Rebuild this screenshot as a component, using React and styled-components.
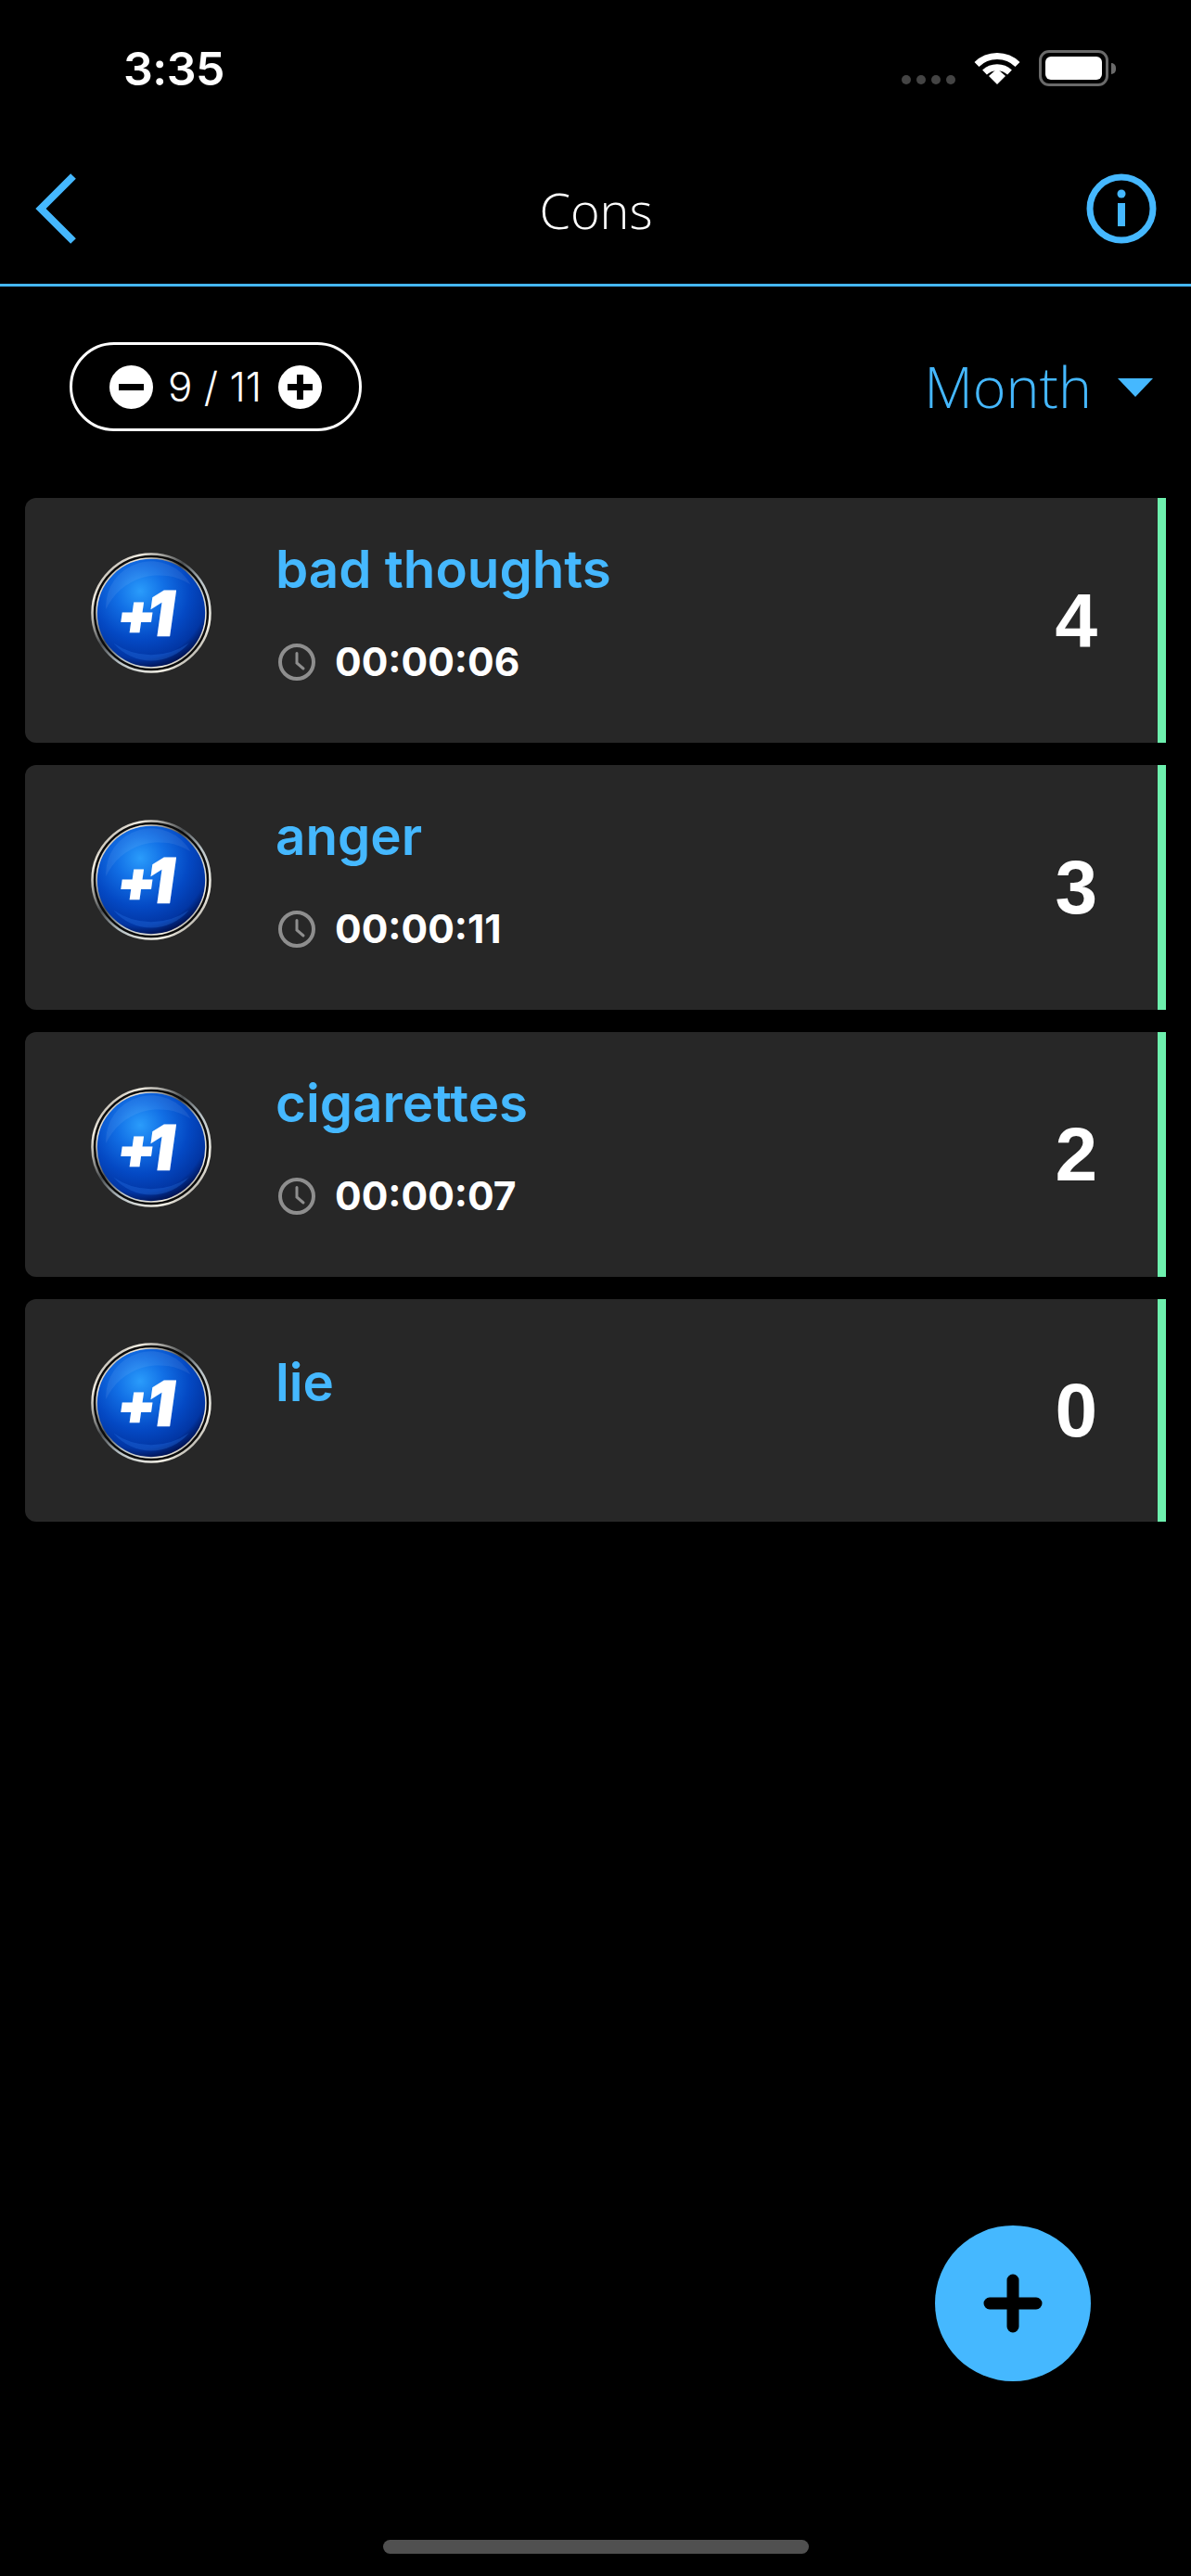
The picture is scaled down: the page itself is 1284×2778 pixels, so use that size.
import styled, { createGlobalStyle } from 'styled-components';

const BLUE = '#45b8ff';

const GlobalStyle = createGlobalStyle`
  html, body {
    margin: 0;
    padding: 0;
    background: #000;
  }
  * {
    box-sizing: border-box;
  }
`;

const items = [
  { id: 'bad', title: 'bad thoughts', time: '00:00:06', count: 4 },
  { id: 'anger', title: 'anger', time: '00:00:11', count: 3 },
  { id: 'cig', title: 'cigarettes', time: '00:00:07', count: 2 },
  { id: 'lie', title: 'lie', count: 0 },
];

const PlusOneBadge = ({ uid }) => (
  <BadgeSvg viewBox="0 0 128 128">
    <defs>
      <radialGradient id={`glow-${uid}`} cx="40%" cy="30%" r="72%">
        <stop offset="0" stopColor="#2a9cfb" />
        <stop offset="0.3" stopColor="#1270e6" />
        <stop offset="0.62" stopColor="#0449c4" />
        <stop offset="0.86" stopColor="#0236a4" />
        <stop offset="1" stopColor="#00104d" />
      </radialGradient>
      <linearGradient id={`rim-${uid}`} x1="0" y1="0" x2="1" y2="1">
        <stop offset="0" stopColor="#6f6b64" />
        <stop offset="0.2" stopColor="#f2ede2" />
        <stop offset="0.42" stopColor="#4c5053" />
        <stop offset="0.58" stopColor="#b8c2c6" />
        <stop offset="0.8" stopColor="#f5f1e6" />
        <stop offset="1" stopColor="#3f3f3f" />
      </linearGradient>
    </defs>
    <circle cx="64" cy="64" r="62.5" fill="#0b0b0b" stroke={`url(#rim-${uid})`} strokeWidth="2.5" />
    <circle cx="64" cy="64" r="58" fill={`url(#glow-${uid})`} stroke={`url(#rim-${uid})`} strokeWidth="1.5" />
    <path d="M16 60a48 48 0 0 1 90-26a62 62 0 0 0-90 26z" fill="#fff" opacity="0.07" />
    <path d="M24 96a52 52 0 0 0 80 0a70 70 0 0 1-80 0z" fill="#2a7cf0" opacity="0.3" />
    <BadgeText transform="translate(0 88) skewX(-8)">
      <PlusMark x="26" y="-2">+</PlusMark>
      <tspan x="58" y="0">1</tspan>
    </BadgeText>
  </BadgeSvg>
);

const ClockIcon = () => (
  <svg width="40" height="40" viewBox="0 0 40 40" fill="none" stroke="#8e8e8e" strokeWidth="4" strokeLinecap="round">
    <circle cx="20" cy="20" r="18" />
    <path d="M20 10.5V21l7 6" strokeWidth="3" />
  </svg>
);

const WifiIcon = () => (
  <svg width="50" height="37" viewBox="0 0 50 37" fill="none" stroke="#fff" strokeWidth="7">
    <path d="M3 15.5C15 3.5 35 3.5 47 15.5" />
    <path d="M11.5 24C19 17 31 17 38.5 24" />
    <path d="M16 28L25 20L34 28L25 37Z" fill="#fff" stroke="none" />
  </svg>
);

const App = () => (
  <Page>
    <GlobalStyle />
    <StatusBar>
      <Clock>3:35</Clock>
      <StatusIcons>
        <SignalDots>
          <i /><i /><i /><i />
        </SignalDots>
        <WifiIcon />
        <Battery>
          <BatteryFill />
        </Battery>
      </StatusIcons>
    </StatusBar>

    <NavBar>
      <svg width="46" height="76" viewBox="0 0 46 76" fill="none" stroke={BLUE} strokeWidth="8">
        <path d="M41 3L6 38L41 73" />
      </svg>
      <NavTitle>Cons</NavTitle>
      <InfoSvg width="76" height="76" viewBox="0 0 76 76" fill="none" stroke={BLUE}>
        <circle cx="38" cy="38" r="34" strokeWidth="7" />
        <path d="M38 32V57" strokeWidth="8" />
        <circle cx="38" cy="22" r="4.5" fill={BLUE} stroke="none" />
      </InfoSvg>
    </NavBar>

    <Toolbar>
      <Stepper>
        <StepButton>
          <svg width="47" height="47" viewBox="0 0 47 47">
            <circle cx="23.5" cy="23.5" r="23.5" fill="#fff" />
            <rect x="10" y="20" width="27" height="7" fill="#000" />
          </svg>
        </StepButton>
        <StepValue>9 / 11</StepValue>
        <StepButton>
          <svg width="47" height="47" viewBox="0 0 47 47">
            <circle cx="23.5" cy="23.5" r="23.5" fill="#fff" />
            <path d="M10 20h10V10h7v10h10v7H27v10h-7V27H10z" fill="#000" />
          </svg>
        </StepButton>
      </Stepper>
      <PeriodSelect>
        <PeriodLabel>Month</PeriodLabel>
        <Caret />
      </PeriodSelect>
    </Toolbar>

    <List>
      {items.map((item) => (
        <Card key={item.id} $short={!item.time}>
          <BadgeSlot $short={!item.time}>
            <PlusOneBadge uid={item.id} />
          </BadgeSlot>
          <CardBody $short={!item.time}>
            <CardTitle>{item.title}</CardTitle>
            {item.time && (
              <TimeRow>
                <ClockIcon />
                <TimeText>{item.time}</TimeText>
              </TimeRow>
            )}
          </CardBody>
          <Count>{item.count}</Count>
        </Card>
      ))}
    </List>

    <Fab>
      <svg width="64" height="64" viewBox="0 0 64 64" fill="none" stroke="#000" strokeWidth="13" strokeLinecap="round">
        <path d="M32 7V57M7 32H57" />
      </svg>
    </Fab>
    <HomeIndicator />
  </Page>
);

export default App;

const Page = styled.div`
  position: relative;
  width: 1284px;
  height: 2778px;
  overflow: hidden;
  background: #000;
  color: #fff;
  font-family: 'Inter', 'Liberation Sans', sans-serif;
`;

const StatusBar = styled.div`
  display: flex;
  justify-content: space-between;
  height: 128px;
  padding: 44px 89px 0 133px;
`;

const Clock = styled.div`
  font-size: 50px;
  font-weight: 600;
  line-height: 60px;
  letter-spacing: -0.5px;
`;

const StatusIcons = styled.div`
  display: flex;
  align-items: flex-start;
  padding-top: 10px;
`;

const SignalDots = styled.div`
  display: flex;
  gap: 6px;
  margin: 27px 20px 0 0;

  i {
    width: 10px;
    height: 10px;
    border-radius: 50%;
    background: #444;
  }
`;

const Battery = styled.div`
  position: relative;
  width: 75px;
  height: 39px;
  margin-left: 20px;
  padding: 4px;
  border: 3px solid #6a6a6a;
  border-radius: 11px;

  &::after {
    content: '';
    position: absolute;
    left: 75px;
    top: 11px;
    width: 5px;
    height: 12px;
    border-radius: 0 6px 6px 0;
    background: #6a6a6a;
  }
`;

const BatteryFill = styled.div`
  width: 100%;
  height: 100%;
  border-radius: 6px;
  background: #fff;
`;

const NavBar = styled.div`
  display: grid;
  grid-template-columns: 1fr auto 1fr;
  align-items: center;
  height: 181px;
  padding: 16px 37px 0 38px;
  border-bottom: 3px solid ${BLUE};
`;

const InfoSvg = styled.svg`
  justify-self: end;
`;

const NavTitle = styled.div`
  margin-top: 2px;
  font-family: 'Open Sans', 'Liberation Sans', sans-serif;
  font-size: 54px;
  font-weight: 300;
  line-height: 76px;
`;

const Toolbar = styled.div`
  display: flex;
  align-items: center;
  justify-content: space-between;
  height: 228px;
  padding: 0 41px 12px 75px;
`;

const Stepper = styled.div`
  display: flex;
  align-items: center;
  justify-content: space-between;
  width: 315px;
  height: 96px;
  padding: 0 40px;
  border: 3px solid #fff;
  border-radius: 48px;
`;

const StepButton = styled.div`
  display: flex;
  width: 47px;
  height: 47px;
`;

const StepValue = styled.span`
  margin-left: -2px;
  font-size: 44px;
  font-weight: 300;
`;

const PeriodSelect = styled.div`
  display: flex;
  align-items: center;
  gap: 28px;
`;

const PeriodLabel = styled.span`
  margin-top: -2px;
  font-family: 'Open Sans', 'Liberation Sans', sans-serif;
  font-size: 61px;
  font-weight: 300;
  color: ${BLUE};
`;

const Caret = styled.div`
  width: 0;
  height: 0;
  margin-top: 2px;
  border-left: 19px solid transparent;
  border-right: 19px solid transparent;
  border-top: 20px solid ${BLUE};
`;

const List = styled.div`
  display: flex;
  flex-direction: column;
  gap: 24px;
  margin: 0 27px;
`;

const Card = styled.div`
  display: flex;
  align-items: flex-start;
  height: ${(p) => (p.$short ? '240px' : '264px')};
  background: #272727;
  border-right: 9px solid #6df0ae;
  border-radius: 12px 0 0 12px;
`;

const BadgeSlot = styled.div`
  flex: none;
  width: 130px;
  height: 130px;
  margin: ${(p) => (p.$short ? '47px' : '59px')} 0 0 71px;
`;

const BadgeSvg = styled.svg`
  display: block;
  width: 130px;
  height: 130px;
`;

const BadgeText = styled.text`
  font-family: 'Inter', 'Liberation Sans', sans-serif;
  font-size: 64px;
  font-weight: 800;
  fill: #fff;
  stroke: #fff;
  stroke-width: 2.5px;
`;

const PlusMark = styled.tspan`
  font-size: 58px;
`;

const CardBody = styled.div`
  display: flex;
  flex: 1;
  flex-direction: column;
  padding: ${(p) => (p.$short ? '58px' : '45px')} 0 0 69px;
`;

const CardTitle = styled.div`
  font-size: 56.5px;
  font-weight: 600;
  line-height: 64px;
  color: ${BLUE};
`;

const TimeRow = styled.div`
  display: flex;
  align-items: center;
  gap: 21px;
  margin-top: 44px;
  padding-left: 3px;
`;

const TimeText = styled.span`
  font-size: 42.5px;
  font-weight: 700;
  line-height: 48px;
`;

const Count = styled.div`
  align-self: center;
  margin-right: 65px;
  font-family: 'Liberation Sans', sans-serif;
  font-size: 82px;
  font-weight: 700;
  line-height: 90px;
`;

const Fab = styled.div`
  position: absolute;
  top: 2400px;
  left: 1008px;
  display: flex;
  align-items: center;
  justify-content: center;
  width: 168px;
  height: 168px;
  border-radius: 50%;
  background: ${BLUE};
`;

const HomeIndicator = styled.div`
  position: absolute;
  left: 413px;
  bottom: 24px;
  width: 459px;
  height: 15px;
  border-radius: 8px;
  background: #505050;
`;
